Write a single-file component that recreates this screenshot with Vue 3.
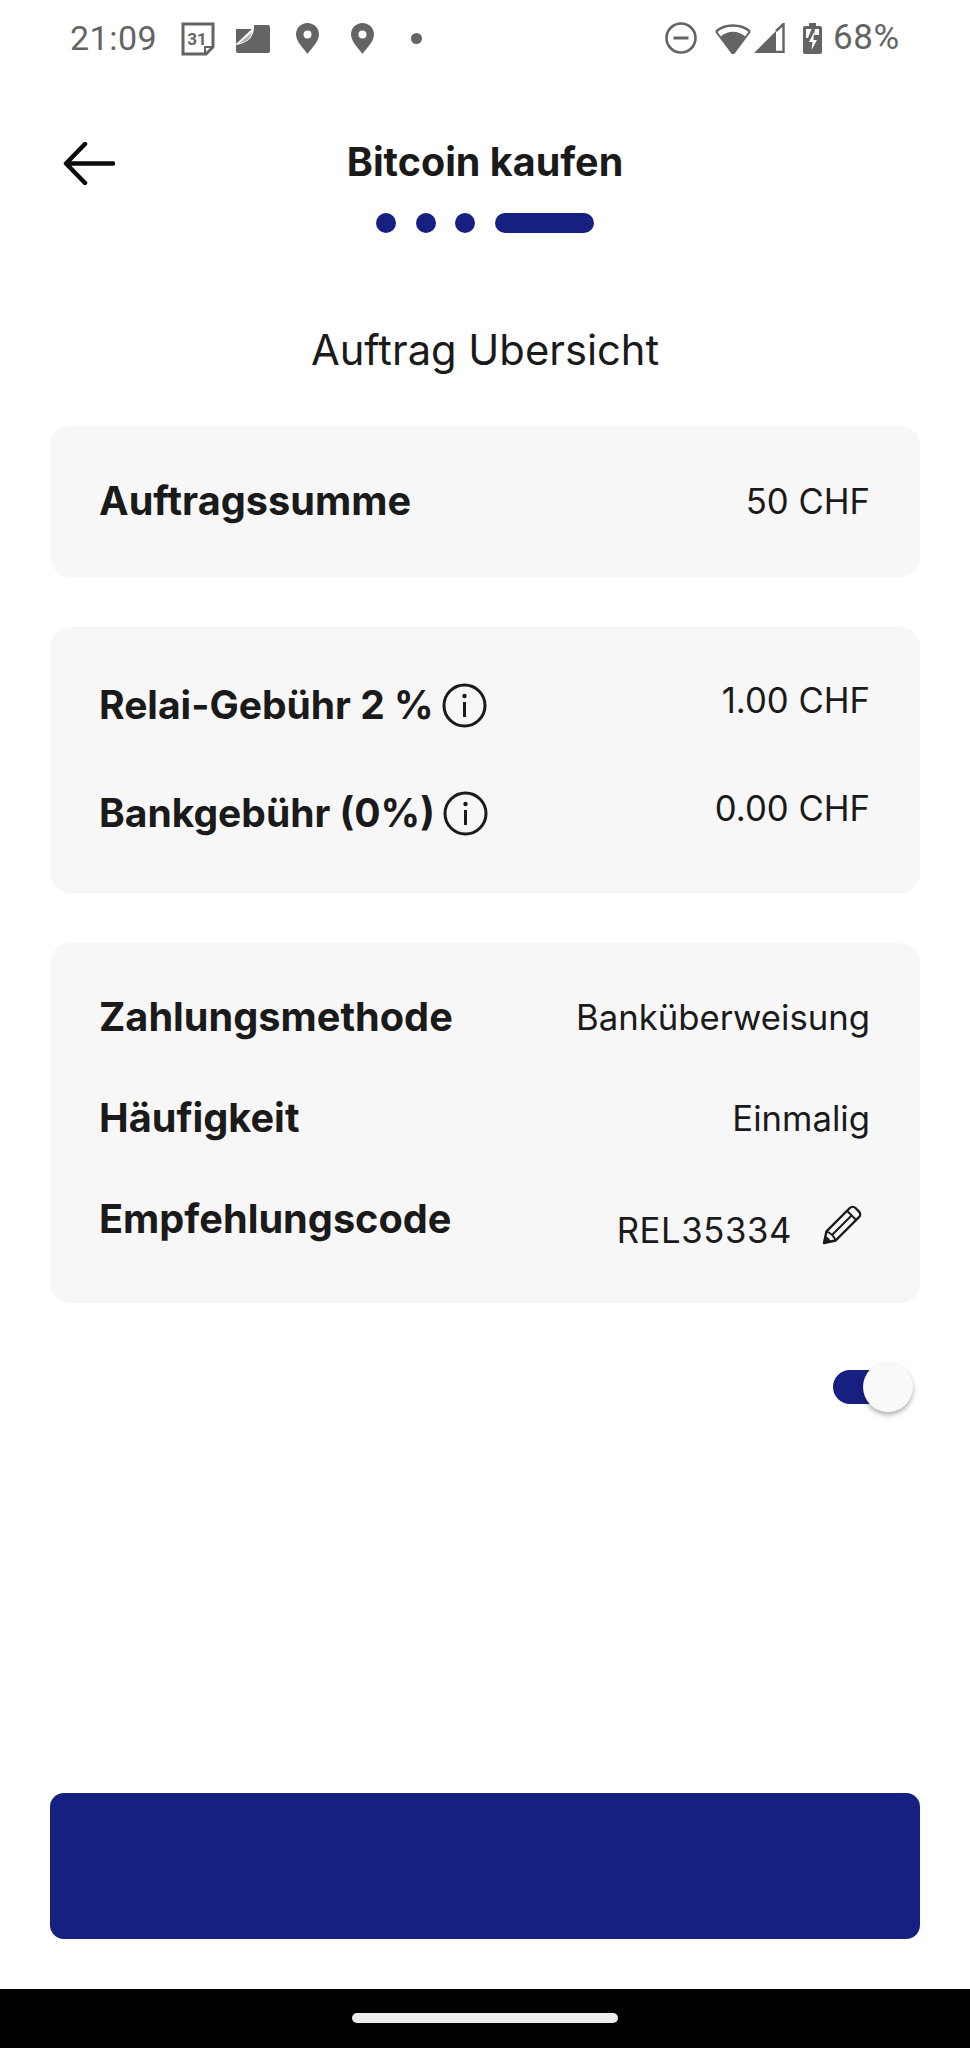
<template>
  <div class="screen">
    <div class="status">
      <span class="clock">21:09</span>
      <svg class="ic cal" width="34" height="34" viewBox="0 0 34 34">
        <path d="M2 2h30v23l-7 7H2z" fill="none" stroke="#646464" stroke-width="3" />
        <path d="M24 32v-7h8" fill="none" stroke="#646464" stroke-width="2" />
        <text x="16" y="23" text-anchor="middle" class="cal-num">31</text>
      </svg>
      <svg class="ic map" width="34" height="28" viewBox="0 0 34 28">
        <path d="M18 0h14a2 2 0 0 1 2 2v24a2 2 0 0 1-2 2H2a2 2 0 0 1-2-2V4h18z" fill="#646464" />
        <path d="M0 19L18 2C18 11 13 18 0 20z" fill="#fff" />
        <path d="M3 18.500L16 7c-1 6-5 10-13 11.500z" fill="#b5b5b5" />
      </svg>
      <svg class="ic pin" width="23" height="31" viewBox="0 0 23 31">
        <path fill-rule="evenodd" d="M11.500 0C5 0 0 5 0 11.500 0 19 9 27 11.500 31 14 27 23 19 23 11.500 23 5 18 0 11.500 0zm0 7.500a4 4 0 1 1 0 8 4 4 0 0 1 0-8z" fill="#646464" />
      </svg>
      <svg class="ic pin pin2" width="23" height="31" viewBox="0 0 23 31">
        <path fill-rule="evenodd" d="M11.500 0C5 0 0 5 0 11.500 0 19 9 27 11.500 31 14 27 23 19 23 11.500 23 5 18 0 11.500 0zm0 7.500a4 4 0 1 1 0 8 4 4 0 0 1 0-8z" fill="#646464" />
      </svg>
      <span class="dot"></span>

      <svg class="ic dnd" width="32" height="32" viewBox="0 0 32 32">
        <circle cx="16" cy="16" r="14.500" fill="none" stroke="#646464" stroke-width="2.600" />
        <path d="M8.500 16h15" stroke="#646464" stroke-width="3" />
      </svg>
      <svg class="ic wifi" width="38" height="31" viewBox="0 0 38 31">
        <path d="M19 31L6.500 13.500C14 7 24 7 31.500 13.500z" fill="#646464" />
        <path d="M2 8.500C11 .5 27 .5 36 8.500" fill="none" stroke="#646464" stroke-width="2.400" />
        <path d="M2 8.500L19 31 36 8.500" fill="none" stroke="#646464" stroke-width="2" />
      </svg>
      <svg class="ic signal" width="31" height="30" viewBox="0 0 31 30">
        <path d="M0 30L22 8v22z" fill="#646464" />
        <path d="M22 8L29.500 1v28H22" fill="none" stroke="#646464" stroke-width="2.400" />
      </svg>
      <svg class="ic batt" width="19" height="31" viewBox="0 0 19 31">
        <path d="M6 0h7v3h4a2 2 0 0 1 2 2v24a2 2 0 0 1-2 2H2a2 2 0 0 1-2-2V5a2 2 0 0 1 2-2h4z" fill="#646464" />
        <path d="M3 6h5.500L5 15H3zM12 6h4v6h-5z" fill="#fff" />
        <path d="M11 9l-5 10h3.500L8.500 27l5.500-10h-3.500z" fill="#fff" />
      </svg>
      <span class="pct">68%</span>
    </div>

    <header class="top">
      <button class="back" aria-label="Zurück">
        <svg width="52" height="43" viewBox="0 0 52 43">
          <path d="M50 21.500H4M22 2L3 21.500 22 41" fill="none" stroke="#0a0a0a" stroke-width="4.500" stroke-linecap="round" stroke-linejoin="round" />
        </svg>
      </button>
      <h1 class="title">Bitcoin kaufen</h1>
    </header>

    <div class="steps">
      <span class="step"></span>
      <span class="step"></span>
      <span class="step"></span>
      <span class="step current"></span>
    </div>

    <h2 class="subtitle">Auftrag Ubersicht</h2>

    <section class="card sum">
      <div class="row">
        <span class="label">Auftragssumme</span>
        <span class="value">50 CHF</span>
      </div>
    </section>

    <section class="card fees">
      <div class="row" v-for="fee in fees" :key="fee.label">
        <span class="label with-icon">
          {{ fee.label }}
          <svg class="info" width="45" height="45" viewBox="0 0 45 45">
            <circle cx="22.500" cy="22.500" r="20.500" fill="none" stroke="#1a1a1a" stroke-width="3" />
            <circle cx="22.500" cy="13" r="2.200" fill="#1a1a1a" />
            <path d="M22.500 19v15" stroke="#1a1a1a" stroke-width="3" />
          </svg>
        </span>
        <span class="value raised">{{ fee.value }}</span>
      </div>
    </section>

    <section class="card details">
      <div class="row">
        <span class="label">Zahlungsmethode</span>
        <span class="value">Banküberweisung</span>
      </div>
      <div class="row">
        <span class="label">Häufigkeit</span>
        <span class="value">Einmalig</span>
      </div>
      <div class="row code">
        <span class="label">Empfehlungscode</span>
        <span class="value code-value">
          REL35334
          <svg class="pencil" width="41" height="40" viewBox="0 0 41 40">
            <g transform="translate(2 38) rotate(-45)">
              <g fill="none" stroke="#1a1a1a" stroke-width="2.400" stroke-linejoin="round">
                <path d="M0 0L10-6.500H43a4 4 0 0 1 4 4v5a4 4 0 0 1-4 4H10z" />
                <path d="M10-6.500C12-2 12 2 10 6.500M39-6.500v13M12 0h27" stroke-width="2" />
              </g>
              <path d="M0 0L6-4C7-1.500 7 1.500 6 4z" fill="#1a1a1a" />
            </g>
          </svg>
        </span>
      </div>
    </section>

    <div class="toggle-row">
      <span class="toggle"><span class="knob"></span></span>
    </div>

    <button class="cta" aria-label="Weiter"></button>

    <div class="navbar"><span class="home"></span></div>
  </div>
</template>

<script setup>
const fees = [
  { label: 'Relai-Gebühr 2 %', value: '1.00 CHF' },
  { label: 'Bankgebühr (0%)', value: '0.00 CHF' },
]
</script>

<style>
html,
body {
  margin: 0;
  background: #fff;
}
</style>

<style scoped>
.screen {
  width: 970px;
  height: 2048px;
  display: flex;
  flex-direction: column;
  background: #fff;
  font-family: Inter, "Liberation Sans", sans-serif;
  color: #1a1a1a;
  overflow: hidden;
}

.status {
  height: 76px;
  flex: none;
  display: flex;
  align-items: flex-start;
  padding: 0 70px;
  box-sizing: border-box;
  color: #646464;
  font-family: Roboto, "Open Sans", sans-serif;
  font-size: 34px;
  line-height: 40px;
}

.clock {
  margin-top: 18px;
  width: 84px;
  letter-spacing: 0.5px;
}

.ic {
  flex: none;
  display: block;
}

.cal { margin: 22px 0 0 27px; }
.cal-num { font: 700 17px Roboto, sans-serif; fill: #646464; }
.map { margin: 25px 0 0 21px; }
.pin { margin: 23px 0 0 26px; }
.pin2 { margin-left: 32px; }

.dot {
  width: 11px;
  height: 11px;
  border-radius: 50%;
  background: #646464;
  margin: 33px 0 0 37px;
}

.dnd { margin: 22px 0 0 243px; }
.wifi { margin: 23px 0 0 17px; }
.signal { margin: 23px 0 0 2px; }
.batt { margin: 23px 0 0 18px; }

.pct {
  margin: 18px 0 0 11px;
  font-size: 35px;
  letter-spacing: 0.6px;
}

.top {
  position: relative;
  height: 100px;
  flex: none;
  display: flex;
  justify-content: center;
  align-items: center;
  margin-top: 12px;
}

.back {
  position: absolute;
  left: 63px;
  top: 54px;
  padding: 0;
  border: 0;
  background: none;
  line-height: 0;
}

.title {
  margin: 48px 0 0;
  font-size: 39.500px;
  line-height: 46px;
  font-weight: 700;
}

.steps {
  flex: none;
  display: flex;
  justify-content: center;
  gap: 19.500px;
  margin-top: 25px;
}

.step {
  width: 20px;
  height: 20px;
  border-radius: 10px;
  background: #152080;
}

.step.current {
  width: 99px;
}

.subtitle {
  margin: 91px 0 0;
  text-align: center;
  font-size: 41.700px;
  line-height: 52px;
  font-weight: 400;
}

.card {
  flex: none;
  box-sizing: border-box;
  margin: 0 50px;
  padding: 0 50px 0 49px;
  background: #f7f7f7;
  border-radius: 20px;
}

.row {
  display: flex;
  justify-content: space-between;
  align-items: center;
}

.label {
  font-size: 39.700px;
  line-height: 46px;
  font-weight: 700;
}

.value {
  font-size: 34.700px;
  line-height: 40px;
}

.sum {
  margin-top: 50px;
  height: 151px;
  padding-bottom: 2px;
  display: flex;
  flex-direction: column;
  justify-content: center;
}

.fees {
  margin-top: 50px;
  height: 266px;
  padding-top: 55px;
}

.fees .row {
  height: 46px;
  margin-bottom: 62px;
}

.with-icon {
  display: flex;
  align-items: center;
  gap: 8px;
  font-size: 39px;
}

.raised {
  position: relative;
  top: -5px;
}

.details {
  margin-top: 50px;
  height: 360px;
  padding-top: 51px;
}

.details .row {
  height: 46px;
  margin-bottom: 55px;
}

.code-value {
  display: flex;
  align-items: center;
  gap: 30px;
  position: relative;
  top: 11px;
  padding-right: 7px;
  letter-spacing: 0.6px;
}

.pencil {
  position: relative;
  top: -5px;
}

.toggle-row {
  flex: none;
  display: flex;
  justify-content: flex-end;
  margin-top: 67px;
  padding-right: 70px;
}

.toggle {
  position: relative;
  display: block;
  width: 67px;
  height: 34px;
  border-radius: 17px;
  background: #152080;
}

.knob {
  position: absolute;
  left: 30px;
  top: -8px;
  width: 50px;
  height: 50px;
  border-radius: 50%;
  background: #f9f9f9;
  box-shadow: 0 3px 5px rgba(0, 0, 0, 0.3);
}

.cta {
  flex: none;
  display: block;
  height: 146px;
  margin: auto 50px 0;
  padding: 0;
  border: 0;
  border-radius: 14px;
  background: #152080;
}

.navbar {
  flex: none;
  height: 59px;
  margin-top: 50px;
  display: flex;
  justify-content: center;
  align-items: flex-start;
  background: #000;
}

.home {
  width: 266px;
  height: 10px;
  margin-top: 24px;
  border-radius: 5px;
  background: #ececec;
}
</style>
